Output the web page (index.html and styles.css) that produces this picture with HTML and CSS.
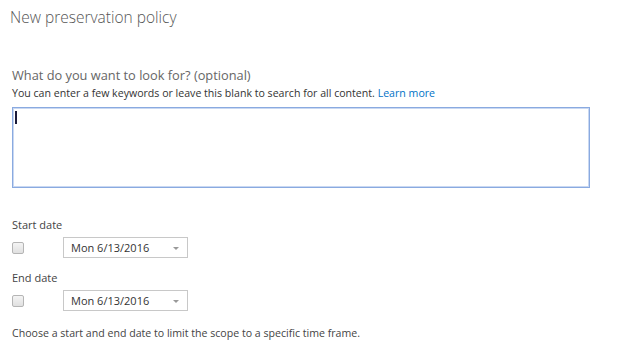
FILE: index.html
```html
<!DOCTYPE html>
<html>
<head>
    <title>New preservation policy</title>
    <meta name="viewport" content="width=device-width, initial-scale=1.0">
    <link rel="stylesheet" href="styles.css">
</head>
<body>
    <h1 class="page-title">New preservation policy</h1>

    <h2 class="section-title">What do you want to look for? (optional)</h2>
    <p class="hint">You can enter a few keywords or leave this blank to search for all content. <a href="#">Learn more</a></p>
    <div class="keywords"><span class="caret"></span></div>

    <div class="date-group">
        <label class="date-label">Start date</label>
        <div class="date-row">
            <span class="check"></span>
            <div class="picker">
                <span>Mon 6/13/2016</span>
                <span class="arrow"></span>
            </div>
        </div>
    </div>
    <div class="date-group">
        <label class="date-label">End date</label>
        <div class="date-row">
            <span class="check"></span>
            <div class="picker">
                <span>Mon 6/13/2016</span>
                <span class="arrow"></span>
            </div>
        </div>
    </div>

    <p class="footnote">Choose a start and end date to limit the scope to a specific time frame.</p>
</body>
</html>
```

FILE: styles.css
```css
body {
    margin: 0;
    padding: 0 0 0 12px;
    font-family: 'Open Sans', 'Noto Sans', sans-serif;
    color: #333;
    background: #fff;
}
.page-title {
    font-size: 15.5px;
    font-weight: 300;
    color: #555;
    margin: 0;
    padding-top: 6px;
    margin-left: -2px;
    line-height: 22px;
}
.section-title {
    font-size: 12.8px;
    font-weight: 400;
    color: #666;
    margin: 38px 0 0 0;
    line-height: 18px;
}
.hint {
    font-size: 10.6px;
    margin: 2px 0 0 0;
    line-height: 15px;
    color: #333;
}
.hint a {
    color: #0072c6;
    text-decoration: none;
}
.keywords {
    margin-top: 6px;
    width: 576px;
    height: 79px;
    border: 1px solid #8aaae0;
    box-shadow: inset 0 0 0 1px #c9d8f2;
    position: relative;
}
.caret {
    position: absolute;
    left: 2px;
    top: 3px;
    width: 2px;
    height: 13px;
    background: #1a1a3a;
}
.date-group {
    margin-top: 29px;
}
.date-group + .date-group {
    margin-top: 12px;
}
.date-label {
    display: block;
    font-size: 11px;
    line-height: 15px;
    color: #444;
}
.date-row {
    display: flex;
    align-items: center;
    margin-top: 5px;
}
.check {
    width: 10px;
    height: 10px;
    border: 1px solid #b5b5b5;
    border-radius: 2px;
    background: linear-gradient(#f4f4f4, #e0e0e0);
}
.picker {
    margin-left: 39px;
    border: 1px solid #c8c8c8;
    display: flex;
    align-items: center;
    justify-content: space-between;
    padding: 0 8px 0 7px;
    box-sizing: border-box;
    width: 125px;
    height: 21px;
    font-size: 11px;
    color: #333;
}
.arrow {
    width: 0;
    height: 0;
    border-left: 3px solid transparent;
    border-right: 3px solid transparent;
    border-top: 3px solid #999;
    margin-top: 2px;
}
.footnote {
    font-size: 10.6px;
    margin: 15px 0 0 0;
    line-height: 15px;
    color: #444;
}
```
